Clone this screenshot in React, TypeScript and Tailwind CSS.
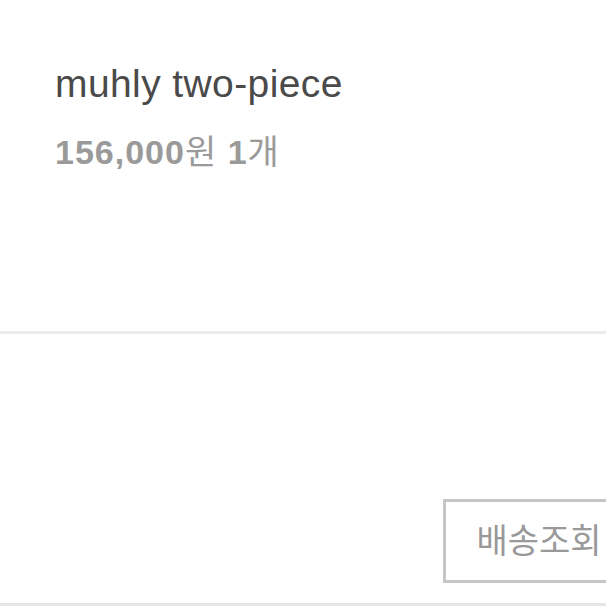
export default function App() {
  return (
    <div className="flex h-[606px] w-[606px] flex-col overflow-hidden bg-white font-['Liberation_Sans','Noto_Sans_CJK_KR',sans-serif]">
      <section className="h-[331px] shrink-0 pl-[55px] pt-[62px]">
        <p className="text-[39px] leading-[44px] tracking-[0.4px] text-[#4a4a4a]">muhly two-piece</p>
        <p className="mt-[27px] text-[34px] leading-[38px] tracking-[1px] text-[#9a9a9a]">
          <span className="font-bold">156,000</span>원 <span className="font-bold">1</span>개
        </p>
      </section>
      <div className="h-[3px] shrink-0 bg-[#ebebeb]" />
      <section className="flex h-[269px] shrink-0 items-end pb-[20px] pl-[443px]">
        <button className="flex h-[84px] w-[192px] shrink-0 items-center justify-center border-[3px] border-[#c6c6c6] text-[34px] text-[#999999]">
          배송조회
        </button>
      </section>
      <div className="h-[3px] shrink-0 bg-[#e6e6e6]" />
    </div>
  );
}
